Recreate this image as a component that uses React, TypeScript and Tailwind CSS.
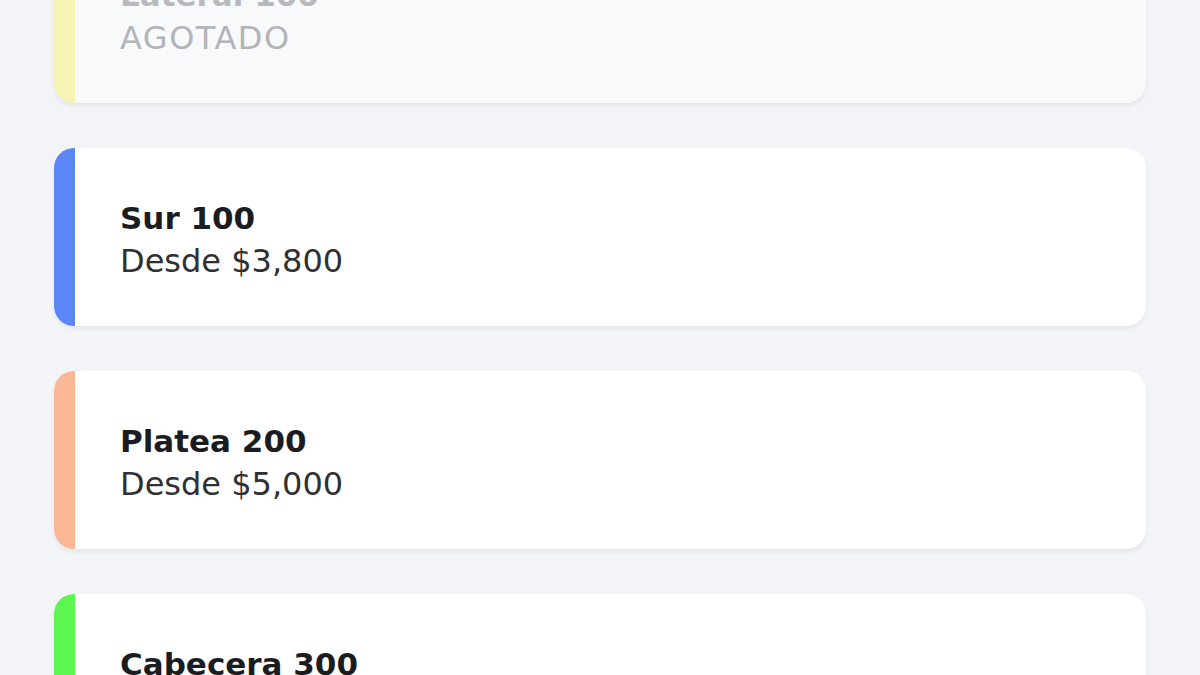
import React from 'react';

interface Section {
  name: string;
  price?: string;
  stripe: string;
  soldOut?: boolean;
}

const sections: Section[] = [
  { name: 'Lateral 100', stripe: 'bg-[#f4f4b4]', soldOut: true },
  { name: 'Sur 100', price: '$3,800', stripe: 'bg-[#5b86f6]' },
  { name: 'Platea 200', price: '$5,000', stripe: 'bg-[#fcb797]' },
  { name: 'Cabecera 300', price: '$6,500', stripe: 'bg-[#5df550]' },
];

const SectionCard: React.FC<{ section: Section }> = ({ section }) => {
  const faded = section.soldOut;
  return (
    <div
      className={`flex h-[178px] rounded-[20px] overflow-hidden shadow-[0_3px_4px_rgba(0,0,0,0.06)] ${
        faded ? 'bg-[#f8f9fb]' : 'bg-white'
      }`}
    >
      <div className={`w-[21px] shrink-0 ${section.stripe}`}></div>
      <div className="flex flex-col justify-center pl-[45px] pt-[5px]">
        <h3
          className={`text-[31px] font-bold leading-[42px] ${
            faded ? 'text-[#b8b9be]' : 'text-[#1b1c1f]'
          }`}
        >
          {section.name}
        </h3>
        <p
          className={`text-[32px] leading-[44px] ${
            faded ? 'text-[#b3b4b9] tracking-[1.5px]' : 'text-[#2f3033]'
          }`}
        >
          {faded ? 'AGOTADO' : `Desde ${section.price}`}
        </p>
      </div>
    </div>
  );
};

export default function App() {
  return (
    <div className="w-[1200px] h-[675px] overflow-hidden bg-[#f3f4f8] font-['DejaVu_Sans',sans-serif]">
      <div className="flex flex-col gap-[45px] px-[54px] -mt-[75px]">
        {sections.map((s) => (
          <SectionCard key={s.name} section={s} />
        ))}
      </div>
    </div>
  );
}
